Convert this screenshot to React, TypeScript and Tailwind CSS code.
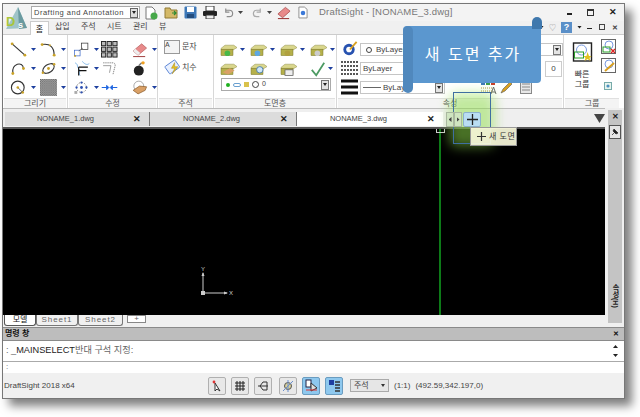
import React from "react";

const Caret = () => <span className="w-[5px] h-[3px] bg-[#1d3f9e] shrink-0 [clip-path:polygon(0_0,100%_0,50%_100%)]" />;
const Down = ({ c = "w-[5px] h-[3px] bg-[#222]" }: { c?: string }) => <span className={`${c} shrink-0 [clip-path:polygon(0_0,100%_0,50%_100%)]`} />;

const Line = () => (
  <svg viewBox="0 0 24 22"><path d="M3 3 L21 19" stroke="#333" strokeWidth="1.6" /><circle cx="3" cy="3" r="2" fill="#c9a227" /><circle cx="21" cy="19" r="2" fill="#c9a227" /></svg>
);
const Poly = () => (
  <svg viewBox="0 0 24 22"><path d="M3 4 C14 2 20 8 20 19" stroke="#333" strokeWidth="1.6" fill="none" /><circle cx="3" cy="4" r="2" fill="#c9a227" /><circle cx="20" cy="19" r="2" fill="#c9a227" /><circle cx="14" cy="5" r="1.3" fill="#c9a227" /></svg>
);
const Arc = () => (
  <svg viewBox="0 0 24 22"><path d="M4 18 C2 4 18 0 19 11" stroke="#333" strokeWidth="1.6" fill="none" /><circle cx="4" cy="18" r="2" fill="#c9a227" /><circle cx="19" cy="11" r="2" fill="#c9a227" /></svg>
);
const Ell = () => (
  <svg viewBox="0 0 24 22"><ellipse cx="12" cy="11" rx="9" ry="5.5" transform="rotate(-35 12 11)" stroke="#333" strokeWidth="1.5" fill="#fff" /><circle cx="12" cy="11" r="2" fill="#c9a227" /><circle cx="20" cy="5" r="1.7" fill="#c9a227" /><circle cx="4" cy="17" r="1.7" fill="#c9a227" /></svg>
);
const Circ = () => (
  <svg viewBox="0 0 24 22"><circle cx="11" cy="11" r="9" stroke="#333" strokeWidth="1.6" fill="#fff" /><path d="M11 11 L18 18" stroke="#333" /><circle cx="11" cy="11" r="1.8" fill="#c9a227" /><circle cx="18" cy="18" r="1.8" fill="#c9a227" /></svg>
);
const Hatch = () => (
  <svg viewBox="0 0 18 18"><defs><pattern id="hp" width="2" height="2" patternUnits="userSpaceOnUse"><rect width="1" height="1" fill="#666" /><rect x="1" y="1" width="1" height="1" fill="#777" /></pattern></defs><rect width="18" height="18" fill="#aaa" /><rect width="18" height="18" fill="url(#hp)" /></svg>
);
const MoveI = () => (
  <svg viewBox="0 0 24 22"><rect x="2" y="12" width="8" height="8" fill="#fff" stroke="#3a66c8" /><rect x="12" y="2" width="9" height="9" fill="#fff" stroke="#333" /><path d="M8 13 L14 9" stroke="#555" /><circle cx="3" cy="20" r="1.4" fill="#c9a227" /></svg>
);
const Grid3 = () => (
  <svg viewBox="0 0 18 18">
    {[0, 6, 12].flatMap((x) => [0, 6, 12].map((y) => <rect key={`${x}-${y}`} x={x + 0.5} y={y + 0.5} width="4.5" height="4.5" fill="#bbb" stroke="#222" />))}
  </svg>
);
const Eraser = () => (
  <svg viewBox="0 0 24 22"><path d="M3 13 L15 3 L22 9 L10 19 Z" fill="#e88a8a" stroke="#b56060" /><path d="M3 13 L10 19 L13 16 L6 10 Z" fill="#eee" /><path d="M3 21 H20" stroke="#8f1f1f" strokeWidth="1.2" /></svg>
);
const Trim = () => (
  <svg viewBox="0 0 24 22"><path d="M3 3 C8 5 5 10 9 12 C11 16 7 18 10 21" stroke="#5aa0e0" fill="none" /><path d="M13 1 C18 6 20 6 23 4" stroke="#5aa0e0" fill="none" /><path d="M8 9 H21 M8 14 H19 M8 9 V21" stroke="#111" strokeWidth="1.6" /></svg>
);
const Fillet = () => (
  <svg viewBox="0 0 24 22"><path d="M3 3 H17 Q20 3 20 7 L17 19" stroke="#777" strokeWidth="1.2" fill="none" strokeDasharray="2 1" /><path d="M3 7 H14 L12 17" stroke="#777" fill="none" /></svg>
);
const Bomb = () => (
  <svg viewBox="0 0 24 22"><circle cx="11" cy="14" r="7" fill="#222" /><path d="M11 7 L15 3" stroke="#777" strokeWidth="2" /><circle cx="17" cy="3" r="2.4" fill="#f0a020" /></svg>
);
const Rotate = () => (
  <svg viewBox="0 0 24 22"><circle cx="12" cy="11" r="7" fill="none" stroke="#555" strokeDasharray="2 2" /><circle cx="12" cy="11" r="2" fill="#2c4fb0" /><circle cx="12" cy="4" r="1.6" fill="#2c4fb0" /><circle cx="5" cy="11" r="1.6" fill="#2c4fb0" /><circle cx="19" cy="11" r="1.6" fill="#2c4fb0" /><circle cx="12" cy="18" r="1.6" fill="#2c4fb0" /><rect x="2" y="16" width="4" height="4" fill="#aaa" /></svg>
);
const Mirror = () => (
  <svg viewBox="0 0 24 22"><path d="M1 11 H8 M8 8 L11 11 L8 14 Z" stroke="#1b63e0" strokeWidth="1.4" fill="#1b63e0" /><path d="M23 11 H16 M16 8 L13 11 L16 14 Z" stroke="#1b63e0" strokeWidth="1.4" fill="#1b63e0" /></svg>
);
const Hand = () => (
  <svg viewBox="0 0 24 22"><circle cx="11" cy="9" r="7" fill="none" stroke="#888" /><path d="M3 15 L12 9 L22 10 L20 15 L10 20 Z" fill="#d9a066" stroke="#8a5a2a" /></svg>
);
const Folder = ({ c = "#b5b04a", top = "#d9d68c", children }: { c?: string; top?: string; children?: React.ReactNode }) => (
  <svg width="18" height="16" viewBox="0 0 22 20"><path d="M1 8 L6 4 H17 L21 7 L16 10 H2 Z" fill={top} stroke="#8b8740" strokeWidth=".6" /><rect x="1" y="9" width="15" height="8" fill={c} stroke="#75722e" strokeWidth=".6" />{children}</svg>
);
const Dim = () => (
  <svg width="18" height="17" viewBox="0 0 22 20"><rect x="3" y="4" width="15" height="11" rx="1" transform="rotate(-35 10 10)" fill="#e8f0ff" stroke="#4c7ad0" /><path d="M13 4 L9 11 H13 L10 18 L17 9 H13 Z" fill="#e5c024" stroke="#9c7c10" strokeWidth=".5" /></svg>
);
const Ic = ({ children }: { children: React.ReactNode }) => <div className="w-[17px] h-[17px] shrink-0 [&>svg]:w-full [&>svg]:h-full">{children}</div>;

const Rib = ({ w, label, children, last }: { w: string; label: string; children: React.ReactNode; last?: boolean }) => (
  <div className={`flex flex-col ${last ? "" : "border-r border-[#d8d8d8]"} ${w} shrink-0`}>
    <div className="h-[63px] pt-[5px]">{children}</div>
    <div className="h-[10px] mx-[1px] border-t border-[#e0e0e0] bg-[#f4f4f4] text-center text-[8px] leading-[10px] text-[#555]">{label}</div>
  </div>
);
const DocTab = ({ t, w, active }: { t: string; w: string; active?: boolean }) => (
  <div className={`flex items-center h-[14px] shrink-0 text-[7.5px] text-[#444] ${w} ${active ? "bg-white" : "bg-[#dcdcdc] border-r border-[#777]"}`}>
    <span className="flex-1 text-center pl-[2px]">{t}</span>
    <span className="w-[25px] text-[#222] text-[9px] font-bold leading-none text-center">✕</span>
  </div>
);
const StatBtn = ({ on, children }: { on?: boolean; children: React.ReactNode }) => (
  <div className={`w-[18px] h-[18px] flex items-center justify-center border rounded-[2px] ${on ? "bg-[#8ec8ee] border-[#6a9cc0]" : "bg-[#e8e8e8] border-[#b0b0b0]"}`}>{children}</div>
);
const Combo = ({ children, w, arrow }: { children?: React.ReactNode; w: string; arrow?: boolean }) => (
  <div className={`flex items-center h-[13px] bg-white border border-[#c5c5c5] text-[#444] text-[8px] shrink-0 ${w}`}>
    <div className="flex-1 flex items-center min-w-0 whitespace-nowrap">{children}</div>
    {arrow && <span className="w-[8px] h-[10px] mr-[1px] bg-[#e4e4e4] border border-[#777] flex items-center justify-center"><Down c="w-[4px] h-[3px] bg-[#222]" /></span>}
  </div>
);

const Row = ({ children, h = "h-[19px]" }: { children: React.ReactNode; h?: string }) => <div className={`flex items-center ${h}`}>{children}</div>;

export default function App() {
  return (
    <div className="relative w-[640px] h-[417px] bg-white overflow-hidden font-['Liberation_Sans','Noto_Sans_CJK_KR',sans-serif]">
      <div className="w-[623px] h-[396px] ml-[2px] mt-[3px] border border-[#777] bg-[#f0f0f0] shadow-[7px_7px_9px_rgba(0,0,0,0.5)] flex flex-col">
        {/* title */}
        <div className="h-[17px] flex items-center shrink-0 bg-[#f3f3f3]">
          <div className="w-[28px] shrink-0" />
          <div className="w-[109px] h-[13px] bg-white border border-[#aaa] flex items-center text-[7.5px] text-[#444] pl-[2px] shrink-0">
            <span className="flex-1 tracking-[0.5px] whitespace-nowrap">Drafting and Annotation</span>
            <span className="w-[8px] h-[10px] mr-[1px] bg-[#e0e0e0] border border-[#666] flex items-center justify-center"><Down c="w-[4px] h-[3px] bg-[#222]" /></span>
          </div>
          <div className="flex items-center gap-[6px] ml-[5px]">
            <svg width="13" height="14" viewBox="0 0 13 14"><path d="M1 1 H7 L10 4 V13 H1 Z" fill="#fff" stroke="#777" /><circle cx="9" cy="10" r="3.5" fill="#47a84a" /></svg>
            <svg width="14" height="13" viewBox="0 0 14 13"><path d="M1 2 H6 L7 4 H13 V12 H1 Z" fill="#d4b968" stroke="#907a35" /><path d="M8 7 H12 M10 5 L12 7 L10 9" stroke="#2d8a33" strokeWidth="1.2" fill="none" /></svg>
            <svg width="13" height="13" viewBox="0 0 13 13"><rect x=".5" y=".5" width="12" height="12" rx="1" fill="#3d78b8" /><rect x="3" y="1" width="7" height="5" fill="#fff" /><rect x="3" y="8" width="7" height="4" fill="#244d7d" /></svg>
            <svg width="14" height="13" viewBox="0 0 14 13"><rect x="3" y="0" width="8" height="5" fill="#fff" stroke="#333" /><rect x="0" y="5" width="14" height="5" rx="1" fill="#222" /><rect x="3" y="9" width="8" height="4" fill="#eee" stroke="#333" /></svg>
          </div>
          <div className="flex items-center ml-[6px] gap-[4px]">
            <svg width="11" height="12" viewBox="0 0 12 12"><path d="M3 3 H7 A3.5 3.5 0 0 1 7 10 H4 M3 1 V5 H7" fill="none" stroke="#8c8c8c" strokeWidth="1.3" /></svg>
            <Down c="w-[5px] h-[3px] bg-[#444]" />
            <span className="w-[1px]" />
            <svg width="11" height="12" viewBox="0 0 12 12"><path d="M9 3 H5 A3.5 3.5 0 0 0 5 10 H8 M9 1 V5 H5" fill="none" stroke="#aaa" strokeWidth="1.3" /></svg>
            <Down c="w-[5px] h-[3px] bg-[#444]" />
          </div>
          <div className="ml-[5px]"><svg width="14" height="14" viewBox="0 0 15 14"><path d="M1 8 L9 1 L14 5 L6 12 Z" fill="#e88a8a" stroke="#b56060" /><path d="M1 13 H13" stroke="#8f1f1f" /></svg></div>
          <div className="ml-[7px]"><svg width="10" height="13" viewBox="0 0 11 13"><path d="M1 .5 H7 L10 3 V12.5 H1 Z" fill="#fff" stroke="#888" /><circle cx="5.5" cy="7" r="2.5" fill="#3b78d8" /></svg></div>
          <span className="ml-[8px]"><Down c="w-[4px] h-[3px] bg-[#334]" /></span>
          <span className="ml-[3px] text-[9.5px] text-[#777] tracking-[0.2px] whitespace-nowrap">DraftSight - [NONAME_3.dwg]</span>
          <div className="flex-1" />
          <div className="flex items-center pr-[7px] text-[#222]">
            <span className="w-[5px] h-[2px] bg-[#222] mt-[3px]" />
            <span className="w-[7px] h-[7px] ml-[15px] border border-[#333] border-t-2" />
            <span className="ml-[15px] text-[9px] font-bold leading-none">✕</span>
          </div>
        </div>
        {/* ribbon tabs */}
        <div className="h-[14px] flex items-end shrink-0 border-b border-[#ccc] bg-[#f0f0f0] text-[8px] text-[#444]">
          <div className="w-[27px] shrink-0" />
          <div className="w-[19px] h-[14px] -mb-px bg-white border border-b-0 border-[#ccc] text-center leading-[16px] text-[#222] z-10">홈</div>
          <div className="flex gap-[10px] pl-[6px] pb-[1px] whitespace-nowrap">
            <span className="w-[16px]">삽입</span><span className="w-[16px]">주석</span><span className="w-[16px]">시트</span><span className="w-[16px]">관리</span><span>뷰</span>
          </div>
          <div className="flex-1" />
          <div className="flex items-center gap-[5px] pr-[6px] pb-[1px] h-[13px]">
            <Down />
            <span className="text-[#999] text-[7px] leading-none">♡</span>
            <span className="w-[11px] h-[11px] bg-[#5a8fc8] text-white text-[9px] font-bold leading-[11px] text-center">?</span>
            <Down />
            <span className="w-[5px] h-[1px] bg-[#222] mt-[3px]" />
            <span className="w-[6px] h-[6px] ml-[2px] border border-[#444]" />
            <span className="text-[7px] font-bold leading-none ml-[2px]">✕</span>
          </div>
        </div>
        {/* ribbon */}
        <div className="h-[73px] flex shrink-0 bg-white">
          <Rib w="w-[65px]" label="그리기">
            <div className="grid grid-cols-[30px_30px] pl-[7px]">
              {[<Line />, <Poly />, <Arc />, <Ell />, <Circ />, <Hatch />].map((ic, i) => (
                <div key={i} className="flex items-center gap-[4px] h-[19px]"><Ic>{ic}</Ic><Caret /></div>
              ))}
            </div>
          </Rib>
          <Rib w="w-[90px]" label="수정">
            <div className="grid grid-cols-[28px_30px_26px] pl-[5px]">
              {[<MoveI />, <Grid3 />, <Eraser />, <Trim />, <Fillet />, <Bomb />, <Rotate />, <Mirror />, <Hand />].map((ic, i) => (
                <div key={i} className="flex items-center gap-[4px] h-[19px]"><Ic>{ic}</Ic>{i !== 4 && i !== 1 && i !== 5 && i !== 7 && <Caret />}</div>
              ))}
            </div>
          </Rib>
          <Rib w="w-[56px]" label="주석">
            <div className="flex flex-col gap-[5px] pl-[6px] text-[8px] text-[#444]">
              <Row h="h-[14px]">
                <div className="w-[16px] h-[14px] border border-[#999] bg-[#f4f4f4] text-[7px] leading-none shrink-0">A</div>
                <span className="flex-1 ml-[2px] whitespace-nowrap">문자</span><span className="mr-[3px]"><Caret /></span>
              </Row>
              <Row h="h-[17px]">
                <Dim /><span className="flex-1 whitespace-nowrap">치수</span><span className="mr-[3px]"><Caret /></span>
              </Row>
            </div>
          </Rib>
          <Rib w="w-[123px]" label="도면층">
            <div className="flex flex-col pl-[6px]">
              <div className="grid grid-cols-[30px_30px_30px_30px] h-[19px]">
                {["#48b848", "#5fa8e0", "#b0a040", "#ccc"].map((c, i) => (
                  <div key={i} className="flex items-center gap-[2px]"><Folder><circle cx="9" cy="14" r="3.5" fill={c} /></Folder><Caret /></div>
                ))}
              </div>
              <div className="grid grid-cols-[30px_30px_30px_30px] h-[19px]">
                <div className="flex items-center"><Folder><path d="M3 14 L12 9 L18 12 L10 17 Z" fill="#d9a066" /></Folder></div>
                <div className="flex items-center"><Folder><circle cx="12" cy="11" r="4" fill="#cfe6f8" stroke="#3a70a0" /></Folder></div>
                <div className="flex items-center"><Folder><rect x="6" y="11" width="10" height="7" fill="#eee" stroke="#666" /></Folder></div>
                <div className="flex items-center gap-[2px]"><svg width="16" height="16" viewBox="0 0 18 18"><path d="M2 10 L7 16 L16 2" fill="none" stroke="#4c9a62" strokeWidth="2" /></svg><Caret /></div>
              </div>
              <div className="w-[110px] h-[13px] ml-[1px] bg-white border border-[#aaa] flex items-center text-[7px] text-[#444] pl-[4px] gap-[3px]">
                <span className="w-[4px] h-[4px] rounded-full bg-[#1fb01f]" />
                <span className="w-[8px] h-[4px] rounded-full border border-[#6aa0d0]" />
                <span className="w-[5px] h-[5px] bg-[#d9c24c]" />
                <span className="w-[7px] h-[7px] rounded-full border border-[#444]" />
                <span className="flex-1">0</span>
                <span className="w-[8px] h-[10px] mr-[1px] bg-[#e4e4e4] border border-[#777] flex items-center justify-center"><Down c="w-[4px] h-[3px] bg-[#222]" /></span>
              </div>
            </div>
          </Rib>
          <Rib w="w-[227px]" label="속성">
            <div className="flex flex-col pl-[4px]">
              <Row>
                <Ic><svg viewBox="0 0 17 18"><circle cx="8" cy="9" r="6" fill="#2752b0" /><circle cx="8" cy="9" r="3" fill="#fff" /><path d="M9 9 L16 1" stroke="#d9a020" strokeWidth="2" /></svg></Ic>
                <div className="ml-[2px]"><Combo w="w-[203px]" arrow><span className="w-[6px] h-[6px] ml-[5px] mr-[4px] rounded-full border border-[#444]" />ByLayer</Combo></div>
              </Row>
              <Row>
                <Ic><svg viewBox="0 0 17 17"><path d="M0 2 H17 M0 6 H17 M0 10 H17 M0 14 H17" stroke="#222" strokeDasharray="2 1" strokeWidth="1.3" /></svg></Ic>
                <div className="ml-[2px]"><Combo w="w-[85px]"><span className="ml-[2px]">ByLayer</span><span className="ml-[14px]">S</span></Combo></div>
                <div className="ml-[100px] w-[17px] h-[16px] bg-white border border-[#ccc] text-center text-[8px] leading-[14px] text-[#444]">0</div>
              </Row>
              <Row>
                <Ic><svg viewBox="0 0 17 17"><path d="M0 2 H17 M0 8 H17 M0 14 H17" stroke="#111" strokeWidth="3" /></svg></Ic>
                <div className="ml-[2px]"><Combo w="w-[85px]" arrow><span className="w-[18px] ml-[2px] mr-[2px] border-t border-[#666]" />ByLayer</Combo></div>
                <svg className="ml-[35px]" width="17" height="14" viewBox="0 0 17 14"><rect x="1" y="0" width="4" height="4" fill="#3d78b8" /><rect x="6" y="0" width="4" height="4" fill="#3d9a4a" /><rect x="11" y="0" width="4" height="4" fill="#c8402a" /><path d="M1 7 H12 M1 10 H12" stroke="#b09040" strokeDasharray="1 1" /><path d="M11 13 L13.5 6 L16 13 M12 11 H15" fill="none" stroke="#666" /></svg>
                <svg className="ml-[3px]" width="12" height="13" viewBox="0 0 12 13"><path d="M1 12 L3 8 L10 1 L12 3 L5 10 Z" fill="#d9a020" stroke="#555" strokeWidth=".6" /></svg>
                <svg className="ml-[8px]" width="12" height="13" viewBox="0 0 12 13"><rect x=".5" y=".5" width="11" height="12" fill="#e8e8e8" stroke="#888" /><path d="M2 3 H10 M2 6 H10 M2 9 H10" stroke="#888" /></svg>
              </Row>
            </div>
          </Rib>
          <div className="w-[56px] shrink-0">
            <Rib w="w-[56px]" label="그룹" last>
              <div className="flex pl-[8px]">
                <div className="w-[29px] flex flex-col items-start">
                  <svg className="mt-[2px]" width="21" height="20" viewBox="0 0 20 20"><rect x="1" y="1" width="18" height="18" fill="#fff" stroke="#222" strokeWidth="1.4" /><circle cx="9" cy="8" r="5" fill="none" stroke="#7a9ae0" /><rect x="2" y="10" width="9" height="6" fill="none" stroke="#2ba02b" /><path d="M15 10 L16.5 14 L19 14 L17 16 L18 19 L15 17 L12 19 L13 16 L11 14 L14 14 Z" fill="#e0c020" /></svg>
                  <div className="mt-[8px] w-[20px] text-[8px] leading-[10px] text-[#333] text-center">빠른<br />그룹</div>
                </div>
                <div className="flex flex-col gap-[4px] -mt-[1px]">
                  <svg width="15" height="15" viewBox="0 0 15 15"><rect x=".5" y=".5" width="14" height="14" fill="#fff" stroke="#666" /><circle cx="8" cy="6" r="4" fill="none" stroke="#7a9ae0" /><rect x="2" y="8" width="7" height="5" fill="none" stroke="#2ba02b" /><path d="M10 10 L14 14 M14 10 L10 14" stroke="#e02020" strokeWidth="1.3" /></svg>
                  <svg width="15" height="15" viewBox="0 0 15 15"><rect x=".5" y=".5" width="14" height="14" fill="#fff" stroke="#666" /><circle cx="8" cy="6" r="4" fill="none" stroke="#7a9ae0" /><path d="M4 13 L13 5" stroke="#d9a020" strokeWidth="2" /></svg>
                  <svg className="mt-[5px] ml-[3px]" width="8" height="8" viewBox="0 0 8 8"><rect x=".5" y=".5" width="7" height="7" fill="#e8f4ee" stroke="#7aa" /><circle cx="4" cy="4" r="1.6" fill="#4a90c0" /></svg>
                </div>
              </div>
            </Rib>
          </div>
        </div>
        {/* work area */}
        <div className="h-[219px] shrink-0 flex">
          <div className="w-[602px] shrink-0 flex flex-col">
            <div className="h-[21px] shrink-0 flex items-start pt-[3px] pl-[2px] bg-[#efefef] border-t border-[#bbb] border-b-2 border-b-[#555]">
              <DocTab t="NONAME_1.dwg" w="w-[145px]" />
              <DocTab t="NONAME_2.dwg" w="w-[147px]" />
              <DocTab t="NONAME_3.dwg" w="w-[146px]" active />
              <div className="flex items-center ml-[3px] relative z-10">
                <span className="w-[8px] h-[15px] bg-[#cfe5c0] border border-[#a9b89f] flex items-center justify-center"><span className="w-[3px] h-[5px] bg-[#444] [clip-path:polygon(100%_0,100%_100%,0_50%)]" /></span>
                <span className="w-[8px] h-[15px] bg-[#cfe5c0] border border-[#a9b89f] flex items-center justify-center"><span className="w-[3px] h-[5px] bg-[#444] [clip-path:polygon(0_0,100%_50%,0_100%)]" /></span>
                <span className="w-[18px] h-[15px] ml-[1px] bg-[#b9ddf3] border border-[#8ab0cc] rounded-[2px] flex items-center justify-center">
                  <svg width="11" height="11" viewBox="0 0 11 11"><path d="M5.5 0 V11 M0 5.5 H11" stroke="#222" strokeWidth="1.3" /></svg>
                </span>
              </div>
              <div className="flex-1" />
              <Down c="w-[11px] h-[9px] mt-[2px] bg-[#444]" />
            </div>
            <div className="h-[186px] shrink-0 bg-black relative flex">
              <div className="ml-[436px] w-[2px] bg-[#0d7a18]" />
              <div className="absolute left-[197px] top-[136px]">
                <svg width="36" height="32" viewBox="0 0 36 32"><path d="M3 8 V28 H27" stroke="#ccc" strokeWidth="1" fill="none" /><path d="M24 26.5 L28 28 L24 29.5 Z" fill="#ccc" /><path d="M1.5 11 L3 7 L4.5 11 Z" fill="#ccc" /><rect x="1" y="26" width="4" height="4" fill="#ccc" /><text x="1" y="6" fontSize="6" fill="#ccc">Y</text><text x="29" y="30" fontSize="6" fill="#ccc">X</text></svg>
              </div>
              <div className="absolute left-[433px] top-0 w-[9px] h-[4px] border border-t-0 border-[#ccc]" />
            </div>
            <div className="flex-1 flex items-start text-[8px] leading-[10px] text-[#666] bg-[#f0f0f0] pl-[1px]">
              <div className="w-[32px] h-[11px] text-center text-[#111] bg-white border-b border-x border-[#555] rounded-b-[3px]">모델</div>
              <div className="w-[42px] h-[11px] text-center tracking-[0.9px] border-b border-x border-[#777] rounded-b-[3px]">Sheet1</div>
              <div className="w-[45px] h-[11px] text-center tracking-[0.9px] border-b border-x border-[#777] rounded-b-[3px]">Sheet2</div>
              <div className="w-[19px] h-[8px] ml-[4px] text-center leading-[6px] border border-[#888] bg-white">+</div>
            </div>
          </div>
          <div className="w-[15px] mt-[2px] mb-[4px] ml-[3px] bg-[#c4c4c4] flex flex-col items-center border-r border-[#eee]">
            <span className="mt-[2px] text-[8px] font-bold leading-[10px] text-[#222]">✕</span>
            <span className="mt-[3px] w-[12px] h-[14px] bg-[#e5e5e5] border border-[#555] flex items-center justify-center">
              <svg width="8" height="8" viewBox="0 0 8 8"><path d="M1 7 L4 4 M3 1 L7 5 L5 6 L2 3 Z" stroke="#222" fill="#222" strokeWidth=".7" /></svg>
            </span>
            <span className="mt-[145px] text-[7px] leading-[8px] font-bold text-[#222] [writing-mode:vertical-rl] whitespace-nowrap">속성(H)</span>
          </div>
        </div>
        {/* command */}
        <div className="h-[14px] shrink-0 flex items-center justify-between pl-[2px] pr-[5px] bg-[#bdbdbd] border-y border-[#8a8a8a] text-[8px] text-[#111] font-bold">
          <span>명령 창</span>
          <span className="text-[7px]">✕</span>
        </div>
        <div className="h-[21px] shrink-0 flex items-center justify-between pl-[3px] pr-[6px] bg-white border-b border-[#aaa] text-[9.2px] text-[#666]">
          <span>: _<span className="text-[#222]">MAINSELECT</span>반대 구석 지정:</span>
          <div className="flex flex-col gap-[6px]">
            <span className="w-[5px] h-[3px] bg-[#222] [clip-path:polygon(50%_0,100%_100%,0_100%)]" />
            <Down />
          </div>
        </div>
        <div className="h-[11px] shrink-0 bg-white pl-[3px] text-[8px] leading-[10px] text-[#666]">:</div>
        {/* status */}
        <div className="h-[25px] shrink-0 flex items-center bg-[#f0f0f0] text-[8px] text-[#444]">
          <span className="ml-[1px] w-[204px] whitespace-nowrap">DraftSight 2018 x64</span>
          <div className="flex items-center gap-[5px]">
            <StatBtn><svg width="12" height="12" viewBox="0 0 12 12"><path d="M4 3 L4 11 L6 9 L9 11 Z" stroke="#333" fill="#fff" /><circle cx="3" cy="2" r="1.4" fill="#d33" /></svg></StatBtn>
            <StatBtn><svg width="12" height="12" viewBox="0 0 12 12"><path d="M1 3 H11 M1 6 H11 M1 9 H11 M3 1 V11 M6 1 V11 M9 1 V11" stroke="#222" /></svg></StatBtn>
            <StatBtn><svg width="12" height="12" viewBox="0 0 12 12"><path d="M1 6 H11 M6 2 H10 V10 H6 L3 6 Z" stroke="#333" fill="none" /></svg></StatBtn>
            <span className="w-[2px] -ml-[5px]" />
            <StatBtn><svg width="12" height="12" viewBox="0 0 12 12"><circle cx="6" cy="6" r="3.5" fill="#d9d09a" stroke="#555" /><path d="M1 11 L11 1 M6 0 V12" stroke="#6a8fcc" /></svg></StatBtn>
            <StatBtn on><svg width="13" height="13" viewBox="0 0 13 13"><rect x="1" y="1" width="5" height="7" fill="#fff" stroke="#224" /><path d="M6 4 L12 9 L6 12 Z" fill="#ddd" stroke="#333" /><path d="M1 11 H12" stroke="#d33" /></svg></StatBtn>
            <StatBtn on><svg width="13" height="13" viewBox="0 0 13 13"><rect x="1" y="1" width="5" height="5" fill="#1f3fa0" /><path d="M7 3 H12 M7 6 H12 M7 9 H12 M7 12 H12" stroke="#333" strokeWidth="1.4" /></svg></StatBtn>
          </div>
          <div className="ml-[7px] w-[39px] h-[13px] flex items-center justify-between px-[3px] bg-[#e6e6e6] border border-[#aaa]">
            <span className="whitespace-nowrap">주석</span><Down c="w-[4px] h-[3px] bg-[#333]" />
          </div>
          <span className="ml-[5px]">(1:1)</span>
          <span className="ml-[5px]">(492.59,342.197,0)</span>
        </div>
      </div>

      {/* DS logo */}
      <div className="absolute left-[6px] top-[7px]">
        <svg width="21" height="23" viewBox="0 0 21 23"><path d="M12 0 L21 21 L0 22 Z" fill="#9fc4c8" /><path d="M12 0 L21 21 L13 22 Z" fill="#6a9aa0" /><text x="0" y="19" fontSize="13" fontWeight="700" fill="#a8c63c" fontFamily="Liberation Sans">D</text><text x="12" y="21" fontSize="9" fontWeight="700" fill="#fff" fontFamily="Liberation Sans">s</text></svg>
      </div>

      {/* highlight */}
      <div className="absolute left-[449px] top-[93px] w-[46px] h-[54px] bg-[#8fe04a]/50 rounded-[8px] blur-[6px]" />
      <div className="absolute left-[453px] top-[92px] w-[38px] h-[52px] border border-[#3f6fa0]" />
      <div className="absolute left-[470px] top-[127px] w-[47px] h-[19px] bg-[#ffffe1]/90 border border-[#999] flex items-center text-[8px] text-[#333] gap-[1px] pl-[6px] whitespace-nowrap">
        <svg width="9" height="9" viewBox="0 0 9 9"><path d="M4.5 0 V9 M0 4.5 H9" stroke="#333" strokeWidth="1.2" /></svg>
        <span className="ml-[2px] tracking-[0.5px]">새 도면</span>
      </div>

      {/* scroll banner */}
      <div className="absolute left-[403px] top-[26px] w-[138px] h-[57px] bg-[#5b97cf] rounded-[4px] flex items-center justify-center text-white text-[16px] tracking-[2px] pl-[2px]">
        새 도면 추가
      </div>
      <div className="absolute left-[403px] top-[26px] w-[10px] h-[67px] bg-[#5088bd] rounded-[5px]" />
      <div className="absolute left-[532px] top-[17px] w-[10px] h-[12px] bg-[#3f78ad] rounded-t-[5px]" />
    </div>
  );
}
